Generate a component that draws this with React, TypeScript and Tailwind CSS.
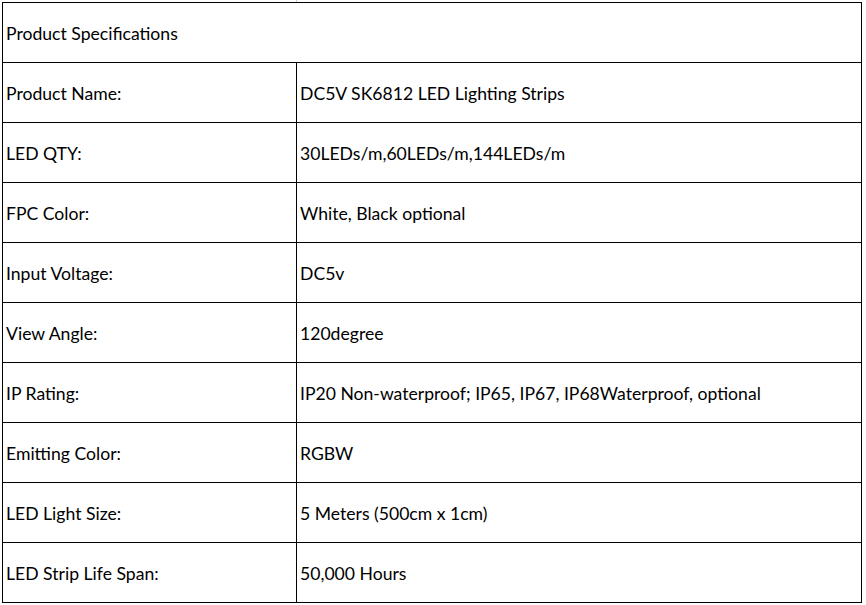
import React from "react";

const specs: [string, string][] = [
  ["Product Name:", "DC5V SK6812 LED Lighting Strips"],
  ["LED QTY:", "30LEDs/m,60LEDs/m,144LEDs/m"],
  ["FPC Color:", "White, Black optional"],
  ["Input Voltage:", "DC5v"],
  ["View Angle:", "120degree"],
  ["IP Rating:", "IP20 Non-waterproof; IP65, IP67, IP68Waterproof, optional"],
  ["Emitting Color:", "RGBW"],
  ["LED Light Size:", "5 Meters (500cm x 1cm)"],
  ["LED Strip Life Span:", "50,000 Hours"],
];

export default function App() {
  return (
    <div className="w-[866px] h-[605px] bg-white text-black font-['Lato','Open_Sans',sans-serif] text-[17.6px]">
      <div className="h-[2px] flex">
        <div className="w-[296px]" />
        <div className="w-px bg-[#c8ccd8]" />
      </div>
      <table className="ml-[2px] w-[860px] border-collapse table-fixed">
        <colgroup>
          <col className="w-[294px]" />
          <col />
        </colgroup>
        <tbody>
          <tr className="h-[60px]">
            <td colSpan={2} className="border border-black pl-[3px] pr-[4px] pt-[3px] align-middle">
              Product Specifications
            </td>
          </tr>
          {specs.map(([label, value], i) => (
            <tr key={i} className="h-[60px]">
              <td className="border border-black pl-[3px] pr-[4px] pt-[3px] align-middle">{label}</td>
              <td className="border border-black px-[3px] pt-[3px] align-middle">{value}</td>
            </tr>
          ))}
        </tbody>
      </table>
    </div>
  );
}
